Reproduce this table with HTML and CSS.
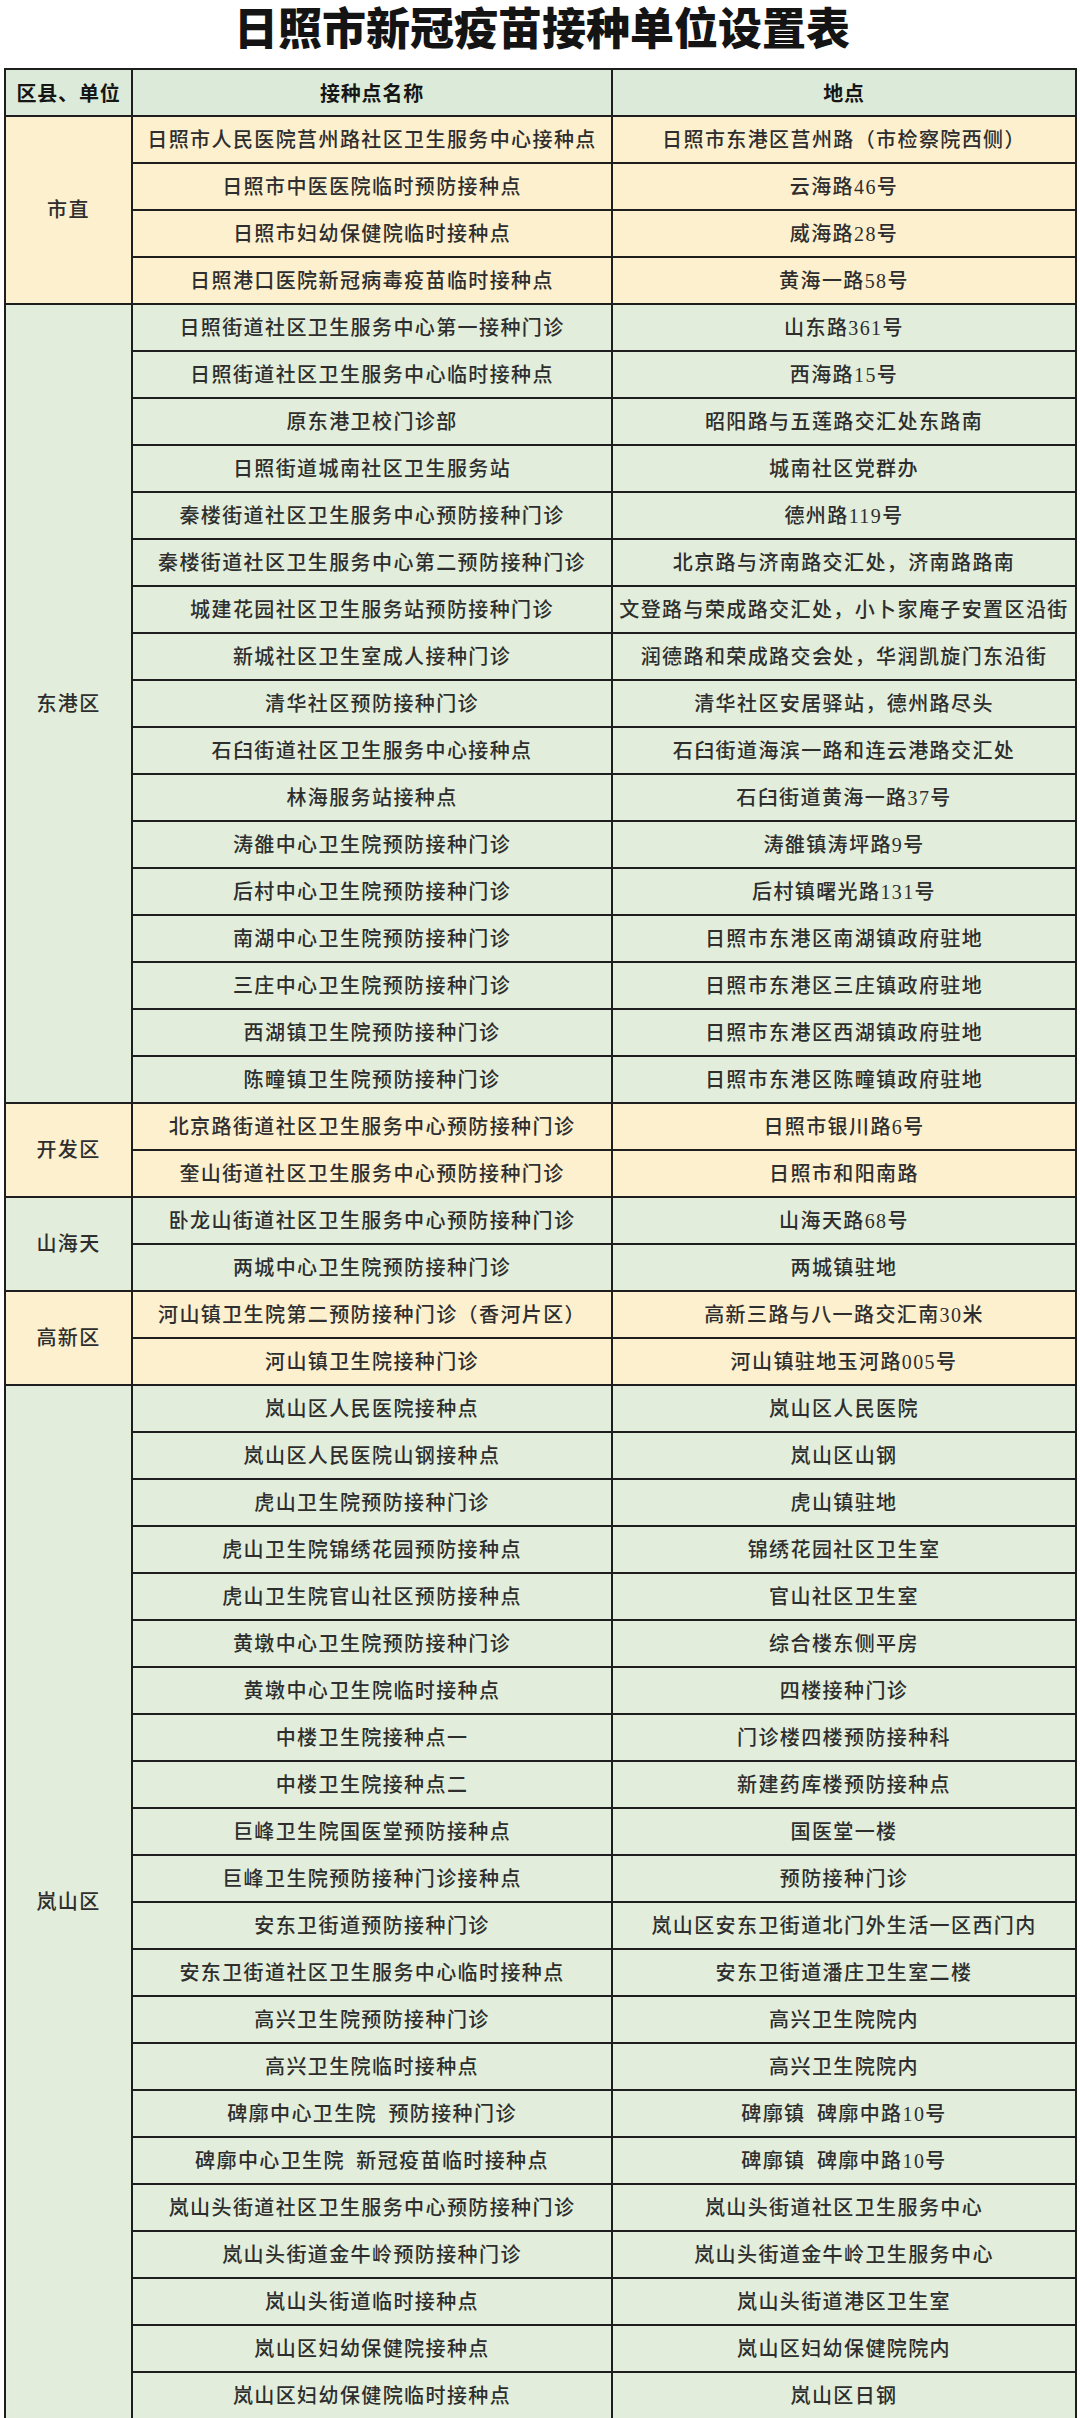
FILE: index.html
```html
<!DOCTYPE html>
<html lang="zh-CN">
<head>
<meta charset="utf-8">
<title>日照市新冠疫苗接种单位设置表</title>
<link rel="stylesheet" href="styles.css">
</head>
<body>
<h1 class="title">日照市新冠疫苗接种单位设置表</h1>
<table class="sheet">
<colgroup><col class="c1"><col class="c2"><col class="c3"></colgroup>
<thead>
<tr class="head"><th>区县、单位</th><th>接种点名称</th><th>地点</th></tr>
</thead>
<tbody class="cream">
<tr><td rowspan="4" class="area">市直</td><td>日照市人民医院莒州路社区卫生服务中心接种点</td><td>日照市东港区莒州路（市检察院西侧）</td></tr>
<tr><td>日照市中医医院临时预防接种点</td><td>云海路46号</td></tr>
<tr><td>日照市妇幼保健院临时接种点</td><td>威海路28号</td></tr>
<tr><td>日照港口医院新冠病毒疫苗临时接种点</td><td>黄海一路58号</td></tr>
</tbody>
<tbody class="green">
<tr><td rowspan="17" class="area">东港区</td><td>日照街道社区卫生服务中心第一接种门诊</td><td>山东路361号</td></tr>
<tr><td>日照街道社区卫生服务中心临时接种点</td><td>西海路15号</td></tr>
<tr><td>原东港卫校门诊部</td><td>昭阳路与五莲路交汇处东路南</td></tr>
<tr><td>日照街道城南社区卫生服务站</td><td>城南社区党群办</td></tr>
<tr><td>秦楼街道社区卫生服务中心预防接种门诊</td><td>德州路119号</td></tr>
<tr><td>秦楼街道社区卫生服务中心第二预防接种门诊</td><td>北京路与济南路交汇处，济南路路南</td></tr>
<tr><td>城建花园社区卫生服务站预防接种门诊</td><td>文登路与荣成路交汇处，小卜家庵子安置区沿街</td></tr>
<tr><td>新城社区卫生室成人接种门诊</td><td>润德路和荣成路交会处，华润凯旋门东沿街</td></tr>
<tr><td>清华社区预防接种门诊</td><td>清华社区安居驿站，德州路尽头</td></tr>
<tr><td>石臼街道社区卫生服务中心接种点</td><td>石臼街道海滨一路和连云港路交汇处</td></tr>
<tr><td>林海服务站接种点</td><td>石臼街道黄海一路37号</td></tr>
<tr><td>涛雒中心卫生院预防接种门诊</td><td>涛雒镇涛坪路9号</td></tr>
<tr><td>后村中心卫生院预防接种门诊</td><td>后村镇曙光路131号</td></tr>
<tr><td>南湖中心卫生院预防接种门诊</td><td>日照市东港区南湖镇政府驻地</td></tr>
<tr><td>三庄中心卫生院预防接种门诊</td><td>日照市东港区三庄镇政府驻地</td></tr>
<tr><td>西湖镇卫生院预防接种门诊</td><td>日照市东港区西湖镇政府驻地</td></tr>
<tr><td>陈疃镇卫生院预防接种门诊</td><td>日照市东港区陈疃镇政府驻地</td></tr>
</tbody>
<tbody class="cream">
<tr><td rowspan="2" class="area">开发区</td><td>北京路街道社区卫生服务中心预防接种门诊</td><td>日照市银川路6号</td></tr>
<tr><td>奎山街道社区卫生服务中心预防接种门诊</td><td>日照市和阳南路</td></tr>
</tbody>
<tbody class="green">
<tr><td rowspan="2" class="area">山海天</td><td>卧龙山街道社区卫生服务中心预防接种门诊</td><td>山海天路68号</td></tr>
<tr><td>两城中心卫生院预防接种门诊</td><td>两城镇驻地</td></tr>
</tbody>
<tbody class="cream">
<tr><td rowspan="2" class="area">高新区</td><td>河山镇卫生院第二预防接种门诊（香河片区）</td><td>高新三路与八一路交汇南30米</td></tr>
<tr><td>河山镇卫生院接种门诊</td><td>河山镇驻地玉河路005号</td></tr>
</tbody>
<tbody class="green">
<tr><td rowspan="22" class="area">岚山区</td><td>岚山区人民医院接种点</td><td>岚山区人民医院</td></tr>
<tr><td>岚山区人民医院山钢接种点</td><td>岚山区山钢</td></tr>
<tr><td>虎山卫生院预防接种门诊</td><td>虎山镇驻地</td></tr>
<tr><td>虎山卫生院锦绣花园预防接种点</td><td>锦绣花园社区卫生室</td></tr>
<tr><td>虎山卫生院官山社区预防接种点</td><td>官山社区卫生室</td></tr>
<tr><td>黄墩中心卫生院预防接种门诊</td><td>综合楼东侧平房</td></tr>
<tr><td>黄墩中心卫生院临时接种点</td><td>四楼接种门诊</td></tr>
<tr><td>中楼卫生院接种点一</td><td>门诊楼四楼预防接种科</td></tr>
<tr><td>中楼卫生院接种点二</td><td>新建药库楼预防接种点</td></tr>
<tr><td>巨峰卫生院国医堂预防接种点</td><td>国医堂一楼</td></tr>
<tr><td>巨峰卫生院预防接种门诊接种点</td><td>预防接种门诊</td></tr>
<tr><td>安东卫街道预防接种门诊</td><td>岚山区安东卫街道北门外生活一区西门内</td></tr>
<tr><td>安东卫街道社区卫生服务中心临时接种点</td><td>安东卫街道潘庄卫生室二楼</td></tr>
<tr><td>高兴卫生院预防接种门诊</td><td>高兴卫生院院内</td></tr>
<tr><td>高兴卫生院临时接种点</td><td>高兴卫生院院内</td></tr>
<tr><td>碑廓中心卫生院&ensp;预防接种门诊</td><td>碑廓镇&ensp;碑廓中路10号</td></tr>
<tr><td>碑廓中心卫生院&ensp;新冠疫苗临时接种点</td><td>碑廓镇&ensp;碑廓中路10号</td></tr>
<tr><td>岚山头街道社区卫生服务中心预防接种门诊</td><td>岚山头街道社区卫生服务中心</td></tr>
<tr><td>岚山头街道金牛岭预防接种门诊</td><td>岚山头街道金牛岭卫生服务中心</td></tr>
<tr><td>岚山头街道临时接种点</td><td>岚山头街道港区卫生室</td></tr>
<tr><td>岚山区妇幼保健院接种点</td><td>岚山区妇幼保健院院内</td></tr>
<tr><td>岚山区妇幼保健院临时接种点</td><td>岚山区日钢</td></tr>
</tbody>
</table>
</body>
</html>
```

FILE: styles.css
```css
html, body {
  margin: 0;
  padding: 0;
  background: #ffffff;
}

body {
  width: 1080px;
  font-family: "Liberation Serif", "Noto Sans CJK SC", serif;
  color: #2e2e2e;
}

.title {
  margin: 0;
  height: 68px;
  line-height: 52px;
  text-align: center;
  font-family: "Noto Sans CJK SC", sans-serif;
  font-weight: 900;
  font-size: 44px;
  color: #141414;
  letter-spacing: 0;
  padding-left: 4px;
}

.sheet {
  margin-left: 4px;
  border-collapse: collapse;
  table-layout: fixed;
  width: 1071px;
}

.c1 { width: 127px; }
.c2 { width: 480px; }
.c3 { width: 464px; }

.sheet th,
.sheet td {
  border: 2px solid #1e1e1e;
  height: 45px;
  padding: 0;
  text-align: center;
  vertical-align: middle;
  white-space: nowrap;
  overflow: hidden;
  font-size: 20px;
  letter-spacing: 1.4px;
  line-height: 24px;
  font-weight: 500;
}

.head th {
  background: #dcebd9;
  font-family: "Noto Sans CJK SC", sans-serif;
  font-weight: 700;
  color: #161616;
  letter-spacing: 0.8px;
}

.cream td { background: #fdf0cf; }
.green td { background: #e2eedb; }

.area {
  letter-spacing: 0.6px;
}
```
